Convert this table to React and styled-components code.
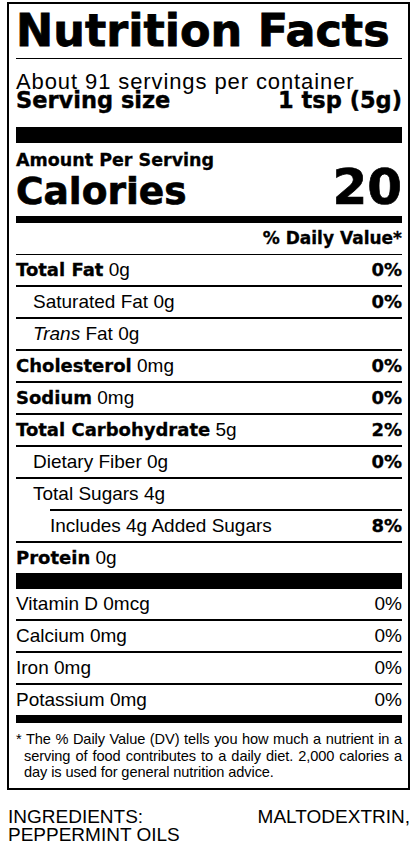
import React from "react";
import styled, { createGlobalStyle } from "styled-components";

const GlobalStyle = createGlobalStyle`
	body {
		margin: 0;
		background: #fff;
		color: #000;
		font-family: "Liberation Sans", Arial, sans-serif;
	}
`;

const Page = styled.div`
	padding: 2px 6px 0 7px;
`;

const Label = styled.section`
	border: 2px solid #000;
	padding: 0 6px 0 7px;
`;

const Title = styled.h1`
	margin: 0;
	padding: 5px 0;
	font: bold 44.5px/44px "DejaVu Sans", sans-serif;
	-webkit-text-stroke: 0.8px #000;
	border-bottom: 1px solid #000;
	white-space: nowrap;
`;

const Servings = styled.div`
	padding: 13px 0 18px;
`;

const ServingsCount = styled.div`
	font-size: 22px;
	line-height: 19px;
	letter-spacing: 0.9px;
`;

const ServingSize = styled.div`
	display: flex;
	justify-content: space-between;
	font: bold 22.5px/18px "DejaVu Sans", sans-serif;
	-webkit-text-stroke: 0.4px #000;
`;

const Bar = styled.div`
	height: ${(p) => p.$h}px;
	background: #000;
`;

const Amount = styled.div`
	padding: 8px 0 7px;
`;

const AmountLabel = styled.div`
	font: bold 17.5px/18px "DejaVu Sans", sans-serif;
	-webkit-text-stroke: 0.3px #000;
`;

const CaloriesRow = styled.div`
	display: flex;
	justify-content: space-between;
	align-items: baseline;
	font-family: "DejaVu Sans", sans-serif;
	font-weight: bold;
	-webkit-text-stroke: 0.7px #000;
`;

const CaloriesLabel = styled.span`
	font-size: 37.5px;
	line-height: 36px;
`;

const CaloriesValue = styled.span`
	font-size: 50px;
	line-height: 36px;
`;

const DailyHead = styled.div`
	padding: 5px 0 6px;
	text-align: right;
	font: bold 17px/20px "DejaVu Sans", sans-serif;
	-webkit-text-stroke: 0.3px #000;
	border-bottom: 1px solid #000;
`;

const Row = styled.div`
	display: flex;
	justify-content: space-between;
	height: 30px;
	line-height: 30px;
	font-size: 19px;
	padding-left: ${(p) => p.$indent || 0}px;
	margin-left: ${(p) => p.$inset || 0}px;
	border-top: ${(p) => (p.$first ? "none" : "2px solid #000")};
	white-space: nowrap;
`;

const Strong = styled.b`
	font: bold 18px/30px "DejaVu Sans", sans-serif;
	-webkit-text-stroke: 0.3px #000;
`;

const Percent = styled.span`
	font: ${(p) =>
		p.$plain
			? `19px/30px "Liberation Sans", Arial, sans-serif`
			: `bold 18px/30px "DejaVu Sans", sans-serif`};
	-webkit-text-stroke: ${(p) => (p.$plain ? "0" : "0.3px #000")};
`;

const Footnote = styled.p`
	margin: 0;
	padding: 8px 0 7px 8px;
	font-size: 14.6px;
	line-height: 16.5px;
	letter-spacing: -0.1px;
`;

// each printed line is kept as on the label, spread edge to edge
const FootLine = styled.span`
	display: block;
	white-space: nowrap;
	text-align: ${(p) => (p.$last ? "left" : "justify")};
	text-align-last: ${(p) => (p.$last ? "left" : "justify")};
	text-indent: ${(p) => (p.$first ? "-8px" : "0")};
`;

const Ingredients = styled.p`
	margin: 18px 0 0;
	padding-left: 1px;
	font-size: 19px;
	line-height: 18.3px;
	text-align: justify;
`;

const nutrients = [
	{ bold: "Total Fat", amount: "0g", dv: "0%" },
	{ label: "Saturated Fat 0g", dv: "0%", indent: 17 },
	{ italic: "Trans", label: " Fat 0g", indent: 17 },
	{ bold: "Cholesterol", amount: "0mg", dv: "0%" },
	{ bold: "Sodium", amount: "0mg", dv: "0%" },
	{ bold: "Total Carbohydrate", amount: "5g", dv: "2%" },
	{ label: "Dietary Fiber 0g", dv: "0%", indent: 17 },
	{ label: "Total Sugars 4g", indent: 17 },
	{ label: "Includes 4g Added Sugars", dv: "8%", inset: 34 },
	{ bold: "Protein", amount: "0g" },
];

const minerals = [
	{ label: "Vitamin D 0mcg", dv: "0%" },
	{ label: "Calcium 0mg", dv: "0%" },
	{ label: "Iron 0mg", dv: "0%" },
	{ label: "Potassium 0mg", dv: "0%" },
];

const footnote = [
	"* The % Daily Value (DV) tells you how much a nutrient in a",
	"serving of food contributes to a daily diet. 2,000 calories a",
	"day is used for general nutrition advice.",
];

const NutrientRow = ({ item, first, plain }) => (
	<Row $first={first} $indent={item.indent} $inset={item.inset}>
		<span>
			{item.bold ? <Strong>{item.bold}</Strong> : ""}
			{item.amount ? " " + item.amount : ""}
			{item.italic ? <i>{item.italic}</i> : ""}
			{item.label}
		</span>
		{item.dv ? <Percent $plain={plain}>{item.dv}</Percent> : ""}
	</Row>
);

const App = () => {
	return (
		<Page>
			<GlobalStyle />
			<Label>
				<Title>Nutrition Facts</Title>
				<Servings>
					<ServingsCount>About 91 servings per container</ServingsCount>
					<ServingSize>
						<span>Serving size</span>
						<span>1 tsp (5g)</span>
					</ServingSize>
				</Servings>
				<Bar $h={16} />
				<Amount>
					<AmountLabel>Amount Per Serving</AmountLabel>
					<CaloriesRow>
						<CaloriesLabel>Calories</CaloriesLabel>
						<CaloriesValue>20</CaloriesValue>
					</CaloriesRow>
				</Amount>
				<Bar $h={7} />
				<DailyHead>% Daily Value*</DailyHead>
				{nutrients.map((item, i) => (
					<NutrientRow key={i} item={item} first={i === 0} />
				))}
				<Bar $h={16} />
				{minerals.map((item, i) => (
					<NutrientRow key={i} item={item} first={i === 0} plain />
				))}
				<Bar $h={8} />
				<Footnote>
					{footnote.map((line, i) => (
						<FootLine
							key={i}
							$first={i === 0}
							$last={i === footnote.length - 1}
						>
							{line}
						</FootLine>
					))}
				</Footnote>
			</Label>
			<Ingredients>INGREDIENTS: MALTODEXTRIN, PEPPERMINT OILS</Ingredients>
		</Page>
	);
};

export default App;
